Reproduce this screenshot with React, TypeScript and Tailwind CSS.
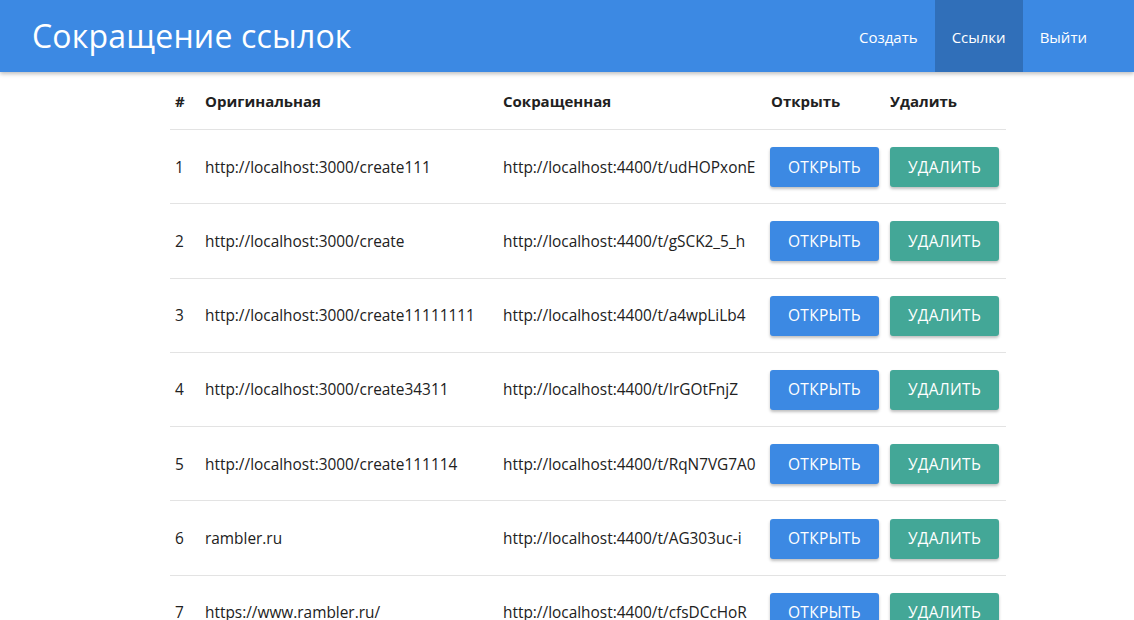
import React from "react";

const rows: [string, string][] = [
  ["http://localhost:3000/create111", "http://localhost:4400/t/udHOPxonE"],
  ["http://localhost:3000/create", "http://localhost:4400/t/gSCK2_5_h"],
  ["http://localhost:3000/create11111111", "http://localhost:4400/t/a4wpLiLb4"],
  ["http://localhost:3000/create34311", "http://localhost:4400/t/IrGOtFnjZ"],
  ["http://localhost:3000/create111114", "http://localhost:4400/t/RqN7VG7A0"],
  ["rambler.ru", "http://localhost:4400/t/AG303uc-i"],
  ["https://www.rambler.ru/", "http://localhost:4400/t/cfsDCcHoR"],
];

const grid = "grid grid-cols-[29px_298px_268px_119px_122px] items-center";

export default function App() {
  return (
    <div
      className="w-[1134px] h-[620px] overflow-hidden bg-white text-[#212121]"
      style={{ fontFamily: '"Open Sans", "Noto Sans", sans-serif' }}
    >
      <nav className="relative z-10 h-[72px] bg-[#3c89e3] shadow-[0_2px_4px_rgba(0,0,0,0.25)] flex items-center justify-between pl-[32px] pr-[30px]">
        <div className="text-white text-[32px] leading-none tracking-[0.2px]">
          Сокращение ссылок
        </div>
        <ul className="flex h-full text-white text-[15px]">
          <li className="h-full flex items-center px-[17px] pt-[2px]">Создать</li>
          <li className="h-full flex items-center px-[17px] pt-[2px] bg-[#306fb9]">Ссылки</li>
          <li className="h-full flex items-center px-[17px] pt-[2px]">Выйти</li>
        </ul>
      </nav>
      <div className="ml-[170px] w-[836px] text-[15.4px]">
        <div className={`${grid} h-[58px] border-b border-[#e3e3e3] font-bold text-[15px] pt-[1px]`}>
          <div className="pl-[5px]">#</div>
          <div className="pl-[6px]">Оригинальная</div>
          <div className="pl-[6px]">Сокращенная</div>
          <div className="pl-[6px]">Открыть</div>
          <div className="pl-[6px]">Удалить</div>
        </div>
        {rows.map(([o, s], i) => (
          <div key={i} className={`${grid} h-[74.3px] border-b border-[#e3e3e3]`}>
            <div className="pl-[5px] pt-[1px]">{i + 1}</div>
            <div className="pl-[6px] pt-[1px] whitespace-nowrap">{o}</div>
            <div className="pl-[6px] pt-[1px] whitespace-nowrap">{s}</div>
            <div className="pl-[5px] pt-[1px]">
              <button className="w-[109px] h-[40px] rounded-[3px] bg-[#3c89e3] text-white text-[15.5px] uppercase tracking-[0.3px] shadow-[0_2px_3px_rgba(0,0,0,0.25)]">
                Открыть
              </button>
            </div>
            <div className="pl-[6px] pt-[1px]">
              <button className="w-[109px] h-[40px] rounded-[3px] bg-[#43a797] text-white text-[15.5px] uppercase tracking-[0.3px] shadow-[0_2px_3px_rgba(0,0,0,0.25)]">
                Удалить
              </button>
            </div>
          </div>
        ))}
      </div>
    </div>
  );
}
